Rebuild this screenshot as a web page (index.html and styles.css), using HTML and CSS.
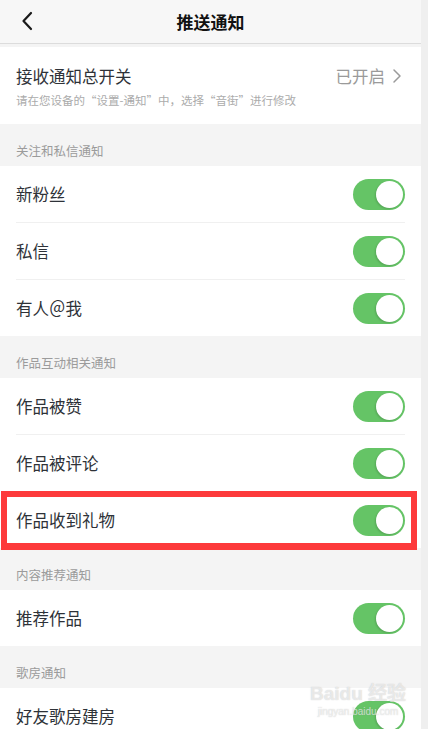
FILE: index.html
```html
<!DOCTYPE html>
<html lang="zh-CN">
<head>
<meta charset="UTF-8">
<meta name="viewport" content="width=device-width, initial-scale=1.0">
<title>推送通知</title>
<link rel="stylesheet" href="styles.css">
</head>
<body>
<div class="page">
    <div class="header">
        <svg class="back" width="12" height="20" viewBox="0 0 12 20">
            <path d="M10 2 L2.5 10 L10 18" fill="none" stroke="#1a1a1a" stroke-width="2.2" stroke-linecap="round" stroke-linejoin="round"/>
        </svg>
        <h1>推送通知</h1>
    </div>

    <div class="master">
        <div class="master-top">
            <span class="label">接收通知总开关</span>
            <span class="status">已开启
                <svg width="10" height="16" viewBox="0 0 10 16">
                    <path d="M2 2 L8 8 L2 14" fill="none" stroke="#9a9a9a" stroke-width="1.5" stroke-linecap="round" stroke-linejoin="round"/>
                </svg>
            </span>
        </div>
        <div class="hint">请在您设备的“设置-通知”中，选择“音街”进行修改</div>
    </div>

    <div class="section-title">关注和私信通知</div>
    <div class="group">
        <div class="row"><span class="label">新粉丝</span><span class="switch"></span></div>
        <div class="row"><span class="label">私信</span><span class="switch"></span></div>
        <div class="row"><span class="label">有人＠我</span><span class="switch"></span></div>
    </div>

    <div class="section-title">作品互动相关通知</div>
    <div class="group">
        <div class="row"><span class="label">作品被赞</span><span class="switch"></span></div>
        <div class="row"><span class="label">作品被评论</span><span class="switch"></span></div>
        <div class="row marked"><span class="label">作品收到礼物</span><span class="switch"></span></div>
    </div>

    <div class="section-title">内容推荐通知</div>
    <div class="group">
        <div class="row"><span class="label">推荐作品</span><span class="switch"></span></div>
    </div>

    <div class="section-title">歌房通知</div>
    <div class="group">
        <div class="row"><span class="label">好友歌房建房</span><span class="switch"></span></div>
    </div>

    <div class="watermark">
        <div class="wm-main">Baidu 经验</div>
        <div class="wm-sub">jingyan.baidu.com</div>
    </div>
</div>
</body>
</html>
```

FILE: styles.css
```css
html, body {
    margin: 0;
    padding: 0;
    height: 100%;
    overflow: hidden;
}

body {
    font-family: "Noto Sans CJK SC", "Noto Sans", sans-serif;
    background-color: #efefef;
    color: #2e3238;
}

.page {
    position: relative;
    width: 421px;
    min-height: 100%;
    background-color: #f4f4f4;
}

.header {
    position: relative;
    height: 43px;
    background-color: #f7f7f7;
    border-bottom: 1px solid #dcdcdc;
    display: flex;
    align-items: center;
    justify-content: center;
}

.header h1 {
    margin: 0;
    font-size: 17px;
    font-weight: 700;
    color: #111;
}

.back {
    position: absolute;
    left: 21px;
    top: 11px;
}

.master {
    margin-top: 3px;
    background-color: #fff;
    padding: 18px 19px 16px 16px;
}

.master-top {
    display: flex;
    justify-content: space-between;
    align-items: center;
    height: 22px;
}

.label {
    font-size: 16.5px;
    line-height: 22px;
}

.status {
    display: flex;
    align-items: center;
    gap: 7px;
    font-size: 16.5px;
    color: #9a9a9a;
}

.hint {
    margin-top: 5px;
    font-size: 11.5px;
    line-height: 16px;
    color: #ababab;
}

.section-title {
    padding: 20px 16px 8px;
    font-size: 12.5px;
    line-height: 14px;
    color: #9b9b9b;
}

.group {
    background-color: #fff;
}

.row {
    position: relative;
    height: 56px;
    margin: 0 16px;
    display: flex;
    justify-content: space-between;
    align-items: center;
    border-bottom: 1px solid #f0f0f0;
}

.row:last-child {
    border-bottom: none;
}

.marked::after {
    content: "";
    position: absolute;
    top: -1px;
    bottom: -2px;
    left: -15px;
    right: -12px;
    border: 6px solid #fd3a3b;
    border-bottom-width: 7px;
}

.switch {
    position: relative;
    width: 52px;
    height: 31px;
    border-radius: 16px;
    background-color: #65c466;
}

.switch::after {
    content: "";
    position: absolute;
    top: 2px;
    right: 2px;
    width: 27px;
    height: 27px;
    border-radius: 50%;
    background-color: #fff;
    box-shadow: -1px 1px 2px rgba(0, 0, 0, 0.15);
}

.watermark {
    position: absolute;
    left: 310px;
    top: 683px;
    white-space: nowrap;
    text-align: center;
    color: rgba(255, 255, 255, 0.6);
    text-shadow: 0 0 1px rgba(140, 140, 140, 0.5);
    font-family: "Liberation Sans", "Noto Sans CJK SC", sans-serif;
}

.wm-main {
    font-size: 19px;
    font-weight: 700;
    line-height: 22px;
}

.wm-sub {
    font-size: 10px;
    line-height: 14px;
}
```
